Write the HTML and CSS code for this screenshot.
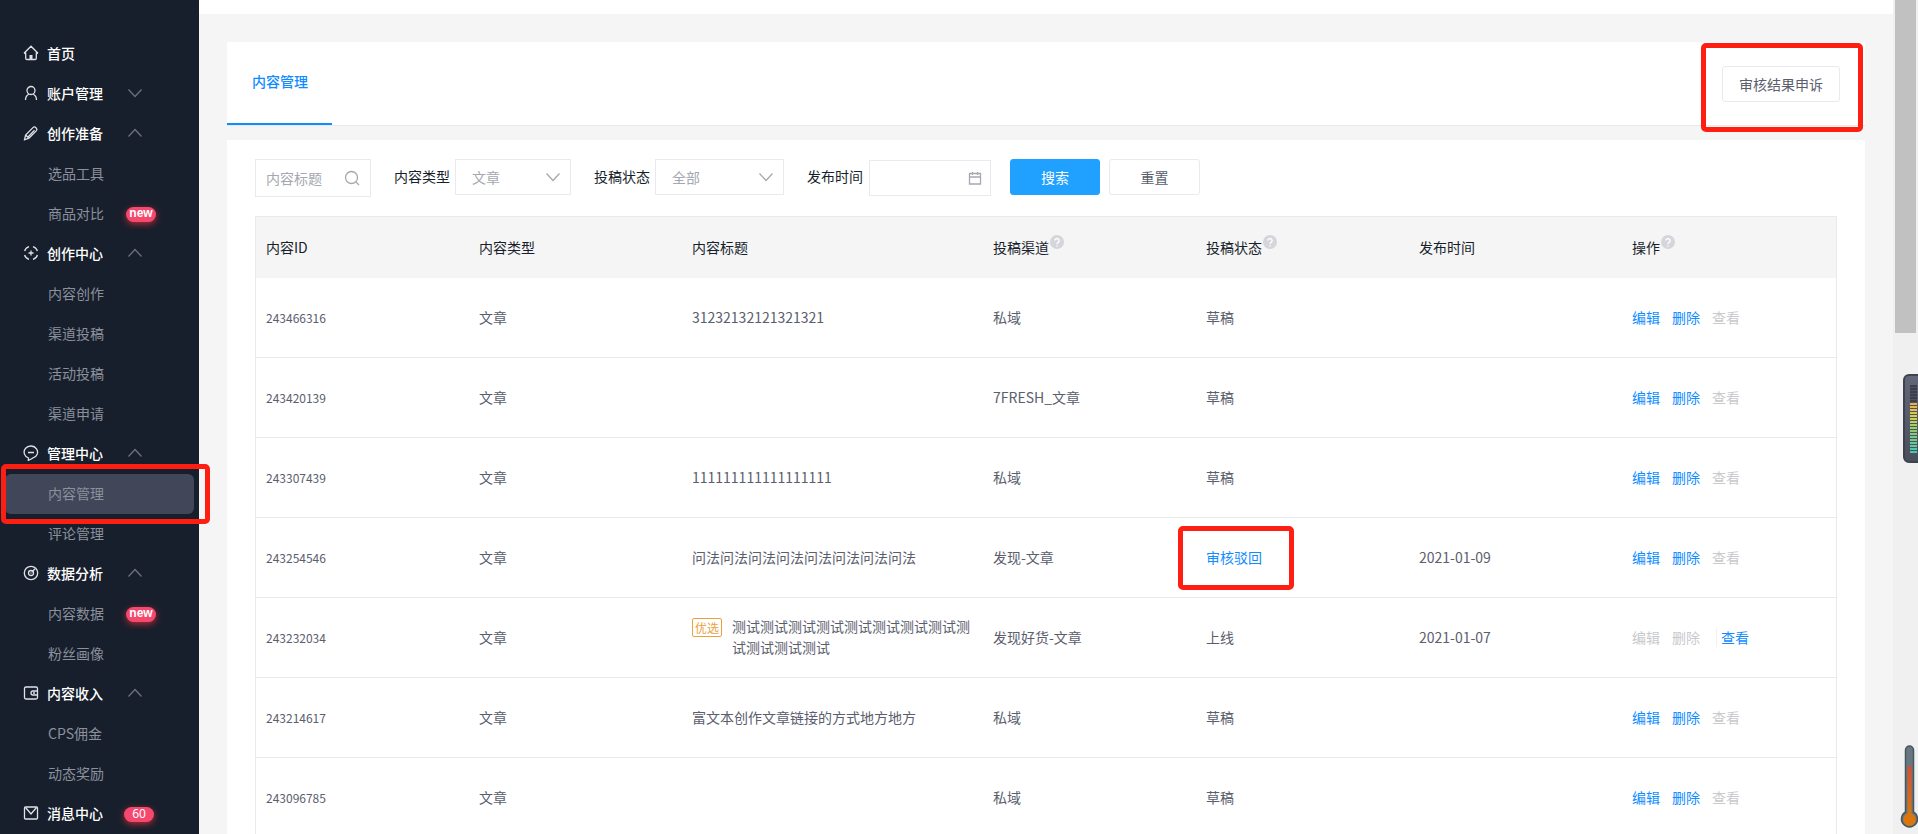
FILE: index.html
```html
<!DOCTYPE html>
<html lang="zh-CN">
<head>
<meta charset="utf-8">
<title>内容管理</title>
<link rel="stylesheet" href="styles.css">
</head>
<body>
<svg class="sprite" aria-hidden="true">
  <symbol id="down" viewBox="0 0 14 14"><path d="M.5 3.500 7 10.500l6.500-7"/></symbol>
  <symbol id="up" viewBox="0 0 14 14"><path d="M.5 10.500 7 3.500l6.500 7"/></symbol>
  <symbol id="help" viewBox="0 0 14 14"><circle cx="7" cy="7" r="7" fill="#d5d6dc" stroke="none"/><path d="M4.900 5.600a2.100 2.100 0 1 1 3.200 1.800c-.8.5-1.100.8-1.100 1.500M7 10.200v1.300" stroke="#fff" stroke-width="1.400"/></symbol>
</svg>
<div class="app">
  <aside class="sidebar">
    <nav class="menu">
      <a class="item" href="#"><svg class="icon" viewBox="0 0 16 16"><path d="M1 8.300 8 1.200l7 7.100M2.700 7.500v5.700q0 1.300 1.300 1.300h8q1.300 0 1.300-1.300V7.500M1 8.300l1.700.2M15 8.300l-1.700.2"/><path class="fill" d="M6.500 10h3v4.200h-3z"/></svg><span>首页</span></a>
      <a class="item" href="#"><svg class="icon" viewBox="0 0 16 16"><circle cx="8" cy="5.500" r="4"/><path d="M2.500 15c0-3 1.500-5 3.500-6M13.500 15c0-3-1.500-5-3.500-6"/></svg><span>账户管理</span><svg class="arrow"><use href="#down"/></svg></a>
      <a class="item" href="#"><svg class="icon" viewBox="0 0 16 16"><path d="M1.500 14.800 2.600 10l7.600-7.600c1.500-1.500 4.800 1.400 3.300 3.200L6 13.200zM5 12l6.500-6.700M2.600 10 6 13.200"/></svg><span>创作准备</span><svg class="arrow"><use href="#up"/></svg></a>
      <a class="item sub" href="#">选品工具</a>
      <a class="item sub" href="#"><span>商品对比</span><b class="badge new">new</b></a>
      <a class="item" href="#"><svg class="icon" viewBox="0 0 16 16"><path d="M6 1.600A6.700 6.700 0 0 0 1.600 6M10 1.600A6.700 6.700 0 0 1 14.400 6M6 14.400A6.700 6.700 0 0 1 1.600 10M10 14.400a6.700 6.700 0 0 0 4.400-4.400M8 5.500v5M5.500 8h5"/></svg><span>创作中心</span><svg class="arrow"><use href="#up"/></svg></a>
      <a class="item sub" href="#">内容创作</a>
      <a class="item sub" href="#">渠道投稿</a>
      <a class="item sub" href="#">活动投稿</a>
      <a class="item sub" href="#">渠道申请</a>
      <a class="item" href="#"><svg class="icon" viewBox="0 0 16 16"><path d="M5.300 15.300 5.500 13A6.700 6.200 0 1 1 9.500 13.200c-1.300.9-2.500 1.600-4.200 2.100zM5 7.500h6"/></svg><span>管理中心</span><svg class="arrow"><use href="#up"/></svg></a>
      <a class="item sub active" href="#">内容管理</a>
      <a class="item sub" href="#">评论管理</a>
      <a class="item" href="#"><svg class="icon" viewBox="0 0 16 16"><circle cx="8" cy="8" r="6.700"/><circle cx="8" cy="8" r="2.500"/><path d="m9 7 3-3.200M8 7.500v1"/></svg><span>数据分析</span><svg class="arrow"><use href="#up"/></svg></a>
      <a class="item sub" href="#"><span>内容数据</span><b class="badge new">new</b></a>
      <a class="item sub" href="#">粉丝画像</a>
      <a class="item" href="#"><svg class="icon" viewBox="0 0 16 16"><rect x="1.500" y="2" width="13" height="12" rx="1.500"/><path d="M14.500 6H10A2 2 0 0 0 10 10h4.500M10 8h2"/></svg><span>内容收入</span><svg class="arrow"><use href="#up"/></svg></a>
      <a class="item sub" href="#">CPS佣金</a>
      <a class="item sub" href="#">动态奖励</a>
      <a class="item" href="#"><svg class="icon" viewBox="0 0 16 16"><rect x="1.500" y="2" width="13" height="12" rx="1"/><path d="M2.500 2.500 8 9l5.500-6.500"/></svg><span>消息中心</span><span class="badge">60</span></a>
    </nav>
    <i class="mark mark-menu"></i>
  </aside>

  <main class="main">
    <div class="topbar"></div>
    <section class="card tabs">
      <a class="tab" href="#">内容管理</a>
      <button class="btn appeal" type="button">审核结果申诉</button>
      <i class="mark mark-appeal"></i>
    </section>
    <section class="card content">
      <form class="filters">
        <div class="box search">
          <input type="text" placeholder="内容标题" aria-label="内容标题">
          <svg viewBox="0 0 16 16"><circle cx="7.500" cy="7.500" r="6"/><path d="m12 12 3 3"/></svg>
        </div>
        <label for="type">内容类型</label>
        <div class="box type"><select id="type"><option>文章</option></select><svg viewBox="0 0 14 14"><use href="#down"/></svg></div>
        <label for="status">投稿状态</label>
        <div class="box status"><select id="status"><option>全部</option></select><svg viewBox="0 0 14 14"><use href="#down"/></svg></div>
        <label for="date">发布时间</label>
        <div class="box date"><input id="date" type="text"><svg viewBox="0 0 14 14"><path d="M1.500 2.500h11v10.500h-11zM1.500 6h11M4.500 1v3M9.500 1v3"/></svg></div>
        <button class="btn primary" type="button">搜索</button>
        <button class="btn reset" type="reset">重置</button>
      </form>

      <table class="list">
        <colgroup><col class="c"><col class="c"><col><col class="c"><col class="c"><col class="c"><col class="c-ops"></colgroup>
        <thead>
          <tr><th>内容ID</th><th>内容类型</th><th>内容标题</th><th>投稿渠道<svg class="help"><use href="#help"/></svg></th><th>投稿状态<svg class="help"><use href="#help"/></svg></th><th>发布时间</th><th>操作<svg class="help"><use href="#help"/></svg></th></tr>
        </thead>
        <tbody>
          <tr><td class="id">243466316</td><td>文章</td><td>31232132121321321</td><td>私域</td><td>草稿</td><td></td><td class="ops"><a href="#">编辑</a><a href="#">删除</a><span>查看</span></td></tr>
          <tr><td class="id">243420139</td><td>文章</td><td></td><td>7FRESH_文章</td><td>草稿</td><td></td><td class="ops"><a href="#">编辑</a><a href="#">删除</a><span>查看</span></td></tr>
          <tr><td class="id">243307439</td><td>文章</td><td>111111111111111111</td><td>私域</td><td>草稿</td><td></td><td class="ops"><a href="#">编辑</a><a href="#">删除</a><span>查看</span></td></tr>
          <tr><td class="id">243254546</td><td>文章</td><td>问法问法问法问法问法问法问法问法</td><td>发现-文章</td><td class="rejected"><a href="#">审核驳回</a><i class="mark mark-status"></i></td><td>2021-01-09</td><td class="ops"><a href="#">编辑</a><a href="#">删除</a><span>查看</span></td></tr>
          <tr><td class="id">243232034</td><td>文章</td><td><div class="picked"><em>优选</em><span>测试测试测试测试测试测试测试测试测试测试测试测试</span></div></td><td>发现好货-文章</td><td>上线</td><td>2021-01-07</td><td class="ops"><span>编辑</span><span>删除</span><a class="view" href="#">查看</a></td></tr>
          <tr><td class="id">243214617</td><td>文章</td><td>富文本创作文章链接的方式地方地方</td><td>私域</td><td>草稿</td><td></td><td class="ops"><a href="#">编辑</a><a href="#">删除</a><span>查看</span></td></tr>
          <tr><td class="id">243096785</td><td>文章</td><td></td><td>私域</td><td>草稿</td><td></td><td class="ops"><a href="#">编辑</a><a href="#">删除</a><span>查看</span></td></tr>
        </tbody>
      </table>
    </section>
  </main>

  <div class="scrollbar"><div class="thumb"></div></div>
</div>

<div class="meter"><div class="bars"></div></div>
<svg class="thermo" viewBox="0 0 20 86">
  <defs><linearGradient id="heat" x1="0" y1="0" x2="0" y2="1"><stop offset="0" stop-color="#d84e30"/><stop offset="1" stop-color="#dc760c"/></linearGradient></defs>
  <path d="M6.500 68V6a4 4 0 0 1 8 0v62a8 8 0 1 1-8 0z" fill="#68777f" stroke="#465660" stroke-width="1.500"/>
  <rect x="8.500" y="22" width="4" height="50" rx="1.500" fill="url(#heat)"/>
  <circle cx="10.500" cy="75.500" r="6.300" fill="#dc760c"/>
</svg>
</body>
</html>
```

FILE: styles.css
```css
* { box-sizing: border-box; }

body {
  margin: 0;
  height: 100vh;
  overflow: hidden;
  background: #f5f5f5;
  color: #5a5e6d;
  font: 14px/20px "Noto Sans CJK SC", sans-serif;
}

a { color: #108cff; text-decoration: none; }
svg { fill: none; stroke: currentColor; }
.sprite { position: absolute; width: 0; height: 0; }
input, select, button { font: inherit; color: inherit; }

.app { display: flex; height: 100vh; overflow: hidden; }

/* sidebar */
.sidebar {
  position: relative;
  flex: none;
  width: 199px;
  padding: 34px 5px 0;
  background: #181f2c;
}
.item {
  display: flex;
  align-items: center;
  height: 40px;
  padding: 0 0 2px 18px;
  color: #fff;
  font-weight: 500;
}
.item.sub {
  padding-left: 43px;
  color: #8a909c;
  font-weight: 400;
}
.item.active { background: #424659; border-radius: 6px; }
.icon {
  flex: none;
  width: 16px;
  height: 16px;
  margin-right: 8px;
  color: #dfe2e7;
  stroke-width: 1.3;
}
.icon .fill { fill: currentColor; stroke: none; }
.arrow {
  width: 14px;
  height: 14px;
  margin-left: 25px;
  color: #6b717d;
  stroke-width: 1.3;
}
.badge {
  width: 30px;
  height: 15px;
  margin: 2px 0 0 21px;
  border-radius: 8px;
  background: #f4486f;
  box-shadow: 0 2px 6px rgba(245, 50, 60, .7);
  color: #fff;
  font: 12px/14px "Noto Sans", sans-serif;
  text-align: center;
}
.badge.new { margin-left: 22px; font: bold 12px/13px "Liberation Sans", sans-serif; }

/* annotation frames */
.mark {
  position: absolute;
  z-index: 2;
  border: 5px solid #ff1e12;
  border-radius: 5px;
}
.mark-menu { left: 1px; top: 464px; width: 209px; height: 60px; }
.mark-appeal { right: 2px; top: 1px; width: 162px; height: 89px; }
.mark-status { left: -18px; top: 8px; width: 116px; height: 64px; }

/* page */
.main { flex: 1; min-width: 0; }
.topbar { height: 14px; background: #fff; }
.card { margin: 0 28px; background: #fff; }
.tabs {
  position: relative;
  display: flex;
  justify-content: space-between;
  align-items: stretch;
  height: 84px;
  margin-top: 28px;
  padding-right: 25px;
  border-bottom: 1px solid #e8e9ec;
}
.tab {
  padding: 29px 24px 32px 25px;
  border-bottom: 2px solid #108cff;
  font-weight: 500;
}
.btn {
  height: 36px;
  border: 1px solid #e8eaf0;
  border-radius: 3px;
  background: #fff;
  padding: 0 16px;
}
.appeal { margin-top: 24px; }
.content { margin-top: 14px; padding: 19px 28px 0; min-height: 694px; }

.filters {
  display: flex;
  align-items: flex-start;
  color: #181f2c;
}
.filters label { margin: 7px 5px 0 23px; }
.box {
  display: flex;
  align-items: center;
  height: 36px;
  border: 1px solid #e8eaf0;
  background: #fff;
  color: #a4a8b0;
}
.box input, .box select {
  flex: 1;
  width: 0;
  height: 100%;
  padding: 0;
  border: 0;
  background: none;
  appearance: none;
  outline: 0;
}
.box input::placeholder { color: #a4a8b0; opacity: 1; }
.box svg { flex: none; width: 14px; height: 14px; margin-right: 10px; stroke-width: 1.3; }
.search { width: 116px; height: 38px; padding-left: 10px; }
.search svg { width: 16px; height: 16px; }
.type { width: 116px; padding-left: 16px; }
.status { width: 129px; padding-left: 16px; }
.date { width: 122px; margin: 1px 0 0 1px; padding-left: 10px; }
.date svg { margin-right: 8px; }
.primary { width: 90px; margin-left: 19px; border-color: #20a0ff; background: #20a0ff; color: #fff; }
.reset { width: 91px; margin-left: 9px; color: #5a5e6d; }

.list {
  width: 100%;
  margin-top: 19px;
  border: 1px solid #e8eaf0;
  border-spacing: 0;
  table-layout: fixed;
}
.list .c { width: 213px; }
.list .c-ops { width: 214px; }
.list th, .list td { padding: 0 10px 2px; text-align: left; }
.list th {
  height: 61px;
  background: #f5f5f5;
  color: #181f2c;
  font-weight: 400;
}
.list td { height: 80px; border-bottom: 1px solid #e8eaec; }
.list .id { padding-bottom: 0; font-size: 12px; }
.help { width: 14px; height: 14px; margin: -6px 0 0 1px; vertical-align: 4px; }
.ops a, .ops span { margin-right: 12px; }
.ops span { color: #c8c9cc; }
.ops .view { margin-left: 4px; padding-left: 4px; border-left: 1px solid #f0f1f3; border-top-left-radius: 3px; }
.rejected { position: relative; }
.picked { display: flex; align-items: flex-start; line-height: 21px; }
.picked em {
  flex: none;
  width: 30px;
  margin: 2px 10px 0 0;
  border: 1px solid #e9a23b;
  border-radius: 2px;
  color: #e9a23b;
  font: 12px/17px "Noto Sans CJK SC", sans-serif;
  text-align: center;
}

/* window edge */
.scrollbar { flex: none; width: 25px; padding: 0 2px; background: #f0f0f0; }
.thumb { height: 333px; background: #c1c1c1; }

.meter {
  position: fixed;
  right: -6px;
  top: 374px;
  width: 21px;
  height: 89px;
  padding: 9px 8px 9px 5px;
  border: 2px solid #3e424f;
  border-radius: 6px;
  background: linear-gradient(#626779, #4b4e5c);
}
.bars {
  width: 7px;
  height: 68px;
  background:
    repeating-linear-gradient(transparent 0 2px, #4d5160 2px 3px),
    linear-gradient(#3d404c 0 18px, #e8b04c 18px, #d4d24a 32px, #8dcc70 46px, #45c8b4 68px);
}
.thermo { position: fixed; right: -1px; bottom: 4px; width: 20px; height: 86px; stroke: none; }
```
